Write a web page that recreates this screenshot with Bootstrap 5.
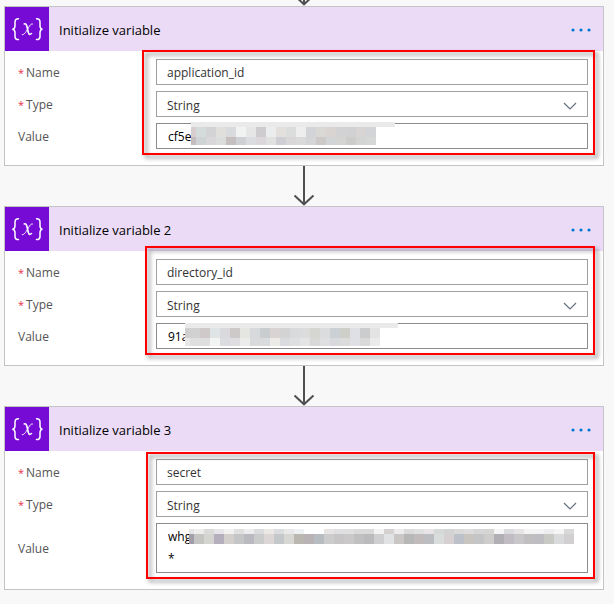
<!DOCTYPE html>
<html lang="en">
<head>
<meta charset="utf-8">
<meta name="viewport" content="width=device-width, initial-scale=1">
<title>Initialize variables</title>
<link href="https://cdn.jsdelivr.net/npm/bootstrap@5.3.0/dist/css/bootstrap.min.css" rel="stylesheet">
<style>
  body { background: #f8f8f8; color: #000; font-family: "Open Sans", "Noto Sans", sans-serif; font-size: 12px; line-height: 18px; }
  .flow { padding: 0 10px 14px 4px; }
  .connector { display: block; margin: 0 auto; stroke: #505050; stroke-width: 2; fill: none; }
  .step { border: 1px solid #c4c4c4; border-radius: 0; background: #fff; }
  .step-head { background: #ebdbf7; height: 44px; }
  .step-icon { width: 44px; height: 44px; background: #770bd6; }
  .step-title { font-size: 13px; line-height: 20px; margin: 2px 0 0 10px; font-weight: 400; }
  .step-menu { padding: 10px 11px 8px; line-height: 1; }
  .step-menu svg { fill: #0078d7; display: block; }
  .step-body { padding: 8px 15px 16px 13px; gap: 6px; }
  .field-label { width: 138px; padding-top: 2px; color: #555; flex: none; }
  .req { color: #e8304a; margin-right: 2px; font-size: 11px; }
  .field { border: 1px solid #a0a0a0; border-radius: 0; height: 26px; padding: 2px 10px; font-size: 12px; line-height: 20px; color: #333; background-color: #fff; }
  .field.entry { border-color: #8c8c8c; padding-left: 11px; color: #000; }
  select.field { padding-top: 4px; padding-bottom: 0; background: #fff url("data:image/svg+xml,%3Csvg xmlns='http://www.w3.org/2000/svg' viewBox='0 0 14 8'%3E%3Cpath d='M1 1l6 6 6-6' fill='none' stroke='%23667080' stroke-width='1.2'/%3E%3C/svg%3E") no-repeat right 10px top 10px / 14px 8px; }
  textarea.field { height: 50px; padding-top: 2px; line-height: 22px; resize: none; overflow: hidden; }
  .callout-frame { position: absolute; border: 2px solid #f00; filter: drop-shadow(3px 3px 2px rgba(0,0,0,.45)); pointer-events: none; }
  .frame-a { top: -1px; left: 137px; right: 8px; bottom: 10px; }
  .frame-b { top: -5px; left: 140px; right: 8px; bottom: 10px; }
  .frame-c { top: 1px; left: 141px; right: 8px; bottom: 10px; }
  .mosaic { position: absolute; }
  .mosaic-a { left: 35px; top: -1px; }
  .mosaic-b { left: 29px; top: 0; }
  .mosaic-c { left: 33px; top: 6px; }
</style>
<script src="https://cdn.jsdelivr.net/npm/bootstrap@5.3.0/dist/js/bootstrap.bundle.min.js"></script>
</head>
<body>
<svg class="d-none" aria-hidden="true">
  <symbol id="variable" viewBox="0 0 44 44">
    <g fill="none" stroke="#fff" stroke-linecap="round">
      <path stroke-width="1.5" d="M13.5 11.8C10.9 11.8 10 12.8 10 15V18.8C10 21 9.2 22.1 7.3 22.2C9.2 22.3 10 23.4 10 25.6V29.4C10 31.6 10.9 32.6 13.5 32.6M31.5 11.8C34.1 11.8 35 12.8 35 15V18.8C35 21 35.8 22.1 37.500 22.2C35.8 22.3 35 23.4 35 25.6V29.4C35 31.6 34.1 32.6 31.5 32.6"/>
      <path stroke-width="1.6" d="M19.2 16.9C20.600 16.500 21.300 17.200 21.800 19L23.400 25.700C23.800 27.600 24.700 28 26.500 26.500"/>
      <path stroke-width="1" d="M27.600 17C26.200 16.500 25.100 17.800 22.900 21.600C20.400 25.900 18.900 28.100 17.200 27.700"/>
    </g>
  </symbol>
  <symbol id="dots" viewBox="0 0 22 6"><circle cx="3" cy="3" r="1.600"/><circle cx="11" cy="3" r="1.600"/><circle cx="19" cy="3" r="1.600"/></symbol>
  <symbol id="arrow" viewBox="0 0 24 40"><path d="M12 0V38M2.500 29.500L12 38.300L21.500 29.500"/></symbol>
</svg>

<main class="flow d-flex flex-column">
  <svg class="connector" width="24" height="6" viewBox="0 34 24 6"><path d="M12 0V38M2.500 29.500L12 38.300L21.500 29.500"/></svg>

  <section class="step">
    <header class="step-head d-flex align-items-center">
      <svg class="step-icon" aria-hidden="true"><use href="#variable"/></svg>
      <h2 class="step-title flex-grow-1">Initialize variable</h2>
      <button type="button" class="step-menu btn border-0" aria-label="More options"><svg width="22" height="6"><use href="#dots"/></svg></button>
    </header>
    <div class="step-body position-relative d-flex flex-column">
      <div class="d-flex align-items-center"><label class="field-label" for="name1"><span class="req">*</span>Name</label><input id="name1" class="field form-control" value="application_id"></div>
      <div class="d-flex align-items-center"><label class="field-label" for="type1"><span class="req">*</span>Type</label><select id="type1" class="field form-select"><option>String</option></select></div>
      <div class="d-flex align-items-center"><label class="field-label" for="value1">Value</label>
        <div class="position-relative flex-grow-1"><input id="value1" class="field entry form-control" value="cf5e"><svg class="mosaic mosaic-a" width="204" height="23" data-strip="204" data-rows="5,10,8"
          data-colors="d8cdcf d5dadb d3d3d6 e0dfdb d9dade f1f3f2 e6e6e6 cfccd0 ecedef e3dfdd dbdddc eeeeee d2d4d7 dad8d5 d9d4d1 d2d2d4 d1d0d2 d9d4d4 d2d4d8|c5bcc0 d0d3d3 d9d7d9 dadddc c5c0bf cfd0d3 dadce0 dbd7da e1e1df cecfd4 d9d7d8 dadadb d3d5d7 cdc9c8 d3d4d5 d4d4d2 cccdcb d3d4d4 d6d8d7"></svg></div></div>
      <div class="callout-frame frame-a"></div>
    </div>
  </section>

  <svg class="connector" width="24" height="40"><use href="#arrow"/></svg>

  <section class="step">
    <header class="step-head d-flex align-items-center">
      <svg class="step-icon" aria-hidden="true"><use href="#variable"/></svg>
      <h2 class="step-title flex-grow-1">Initialize variable 2</h2>
      <button type="button" class="step-menu btn border-0" aria-label="More options"><svg width="22" height="6"><use href="#dots"/></svg></button>
    </header>
    <div class="step-body position-relative d-flex flex-column">
      <div class="d-flex align-items-center"><label class="field-label" for="name2"><span class="req">*</span>Name</label><input id="name2" class="field form-control" value="directory_id"></div>
      <div class="d-flex align-items-center"><label class="field-label" for="type2"><span class="req">*</span>Type</label><select id="type2" class="field form-select"><option>String</option></select></div>
      <div class="d-flex align-items-center"><label class="field-label" for="value2">Value</label>
        <div class="position-relative flex-grow-1"><input id="value2" class="field entry form-control" value="91a"><svg class="mosaic mosaic-b" width="213" height="23" data-strip="213" data-rows="5,10,8"
          data-colors="cfcfcf d1d1d2 cfc9ca dfe4e7 dadade cdc9c8 e5e6e1 d8d9dc c9cdd0 d9d4d3 d3d3d3 d8dadc dcdcdc d5d5d1 dbdcdd cbd0d5 cfcfc9 dfe0e6 cbccce e3e3e3|e7e7e8 dfdfdf dedede f2f4f3 dbdce0 dfdddf ececec d8dadc d9dbdc edebe7 dadbde dedfe1 e4e4e4 d8d8d8 dfdfe1 d7d9dd dcdbdb dfe0e6 d9d9d9 ebebeb"></svg></div></div>
      <div class="callout-frame frame-b"></div>
    </div>
  </section>

  <svg class="connector" width="24" height="40"><use href="#arrow"/></svg>

  <section class="step">
    <header class="step-head d-flex align-items-center">
      <svg class="step-icon" aria-hidden="true"><use href="#variable"/></svg>
      <h2 class="step-title flex-grow-1">Initialize variable 3</h2>
      <button type="button" class="step-menu btn border-0" aria-label="More options"><svg width="22" height="6"><use href="#dots"/></svg></button>
    </header>
    <div class="step-body position-relative d-flex flex-column">
      <div class="d-flex align-items-center"><label class="field-label" for="name3"><span class="req">*</span>Name</label><input id="name3" class="field form-control" value="secret"></div>
      <div class="d-flex align-items-center"><label class="field-label" for="type3"><span class="req">*</span>Type</label><select id="type3" class="field form-select"><option>String</option></select></div>
      <div class="d-flex align-items-center"><label class="field-label" for="value3">Value</label>
        <div class="position-relative flex-grow-1 d-flex"><textarea id="value3" class="field entry form-control" rows="2">whg
*</textarea><svg class="mosaic mosaic-c" width="385" height="15" data-strip="0" data-rows="0,5,10"
          data-colors="e5e5e8 ededed dadad8 e5e5ea f1f1f1 dfdfdf ececef dadbdc ece8e6 dadcde e8e8e8 edf1f4 ffffff ffffff e6e5e4 dfdfe1 dfdfe0 dadada dadada f3f3f3 d5d1d1 ececee dadada dfe1e1 e8e4e5 d5d9d8 d3d3d3 d9d9d9 dcdcdc d6d6d6 d5d6d4 f4f4f4 dadbdf e6e4e5 f4f4f4 f3f3f3 ededef f5f5f5 d9d9d9|a19dab c5c5c3 d4d4d1 b5afbd d3cfcc c4c5c7 bab9bf cacccb ddd6d7 c4c8cb d7d7d4 bab7b1 bab3b6 b6bcbf cccccc c7c5c6 cac8c9 c0c0c1 bbbabd cfced1 e1e2e4 cac6c5 b5b8b6 c1bcbb bcbdc1 d9dddb d6d0d3 bcc0c8 c8c4c0 c4c5c7 cfcdcc b1afb4 c1bcc3 c9c6c9 c0bebf bebdc2 c8c8c5 d8dadc d1cfd0"></svg></div></div>
      <div class="callout-frame frame-c"></div>
    </div>
  </section>
</main>

<script>
  // Fills each redaction mosaic: an optional strip on top, then rows of colour cells.
  document.querySelectorAll('.mosaic').forEach(svg => {
    const add = (x, y, w, h, fill) => {
      const r = document.createElementNS('http://www.w3.org/2000/svg', 'rect');
      Object.entries({ x, y, width: w, height: h, fill, 'shape-rendering': 'crispEdges' }).forEach(([k, v]) => r.setAttribute(k, v));
      svg.append(r);
    };
    const [strip, ...heights] = svg.dataset.rows.split(',').map(Number);
    if (strip) add(0, 0, +svg.dataset.strip, strip, '#eaeaea');
    let y = strip;
    svg.dataset.colors.split('|').forEach((row, i) => {
      row.split(' ').forEach((c, n) => add(n ? n * 10 - 5 : 0, y, n ? 10 : 5, heights[i], '#' + c));
      y += heights[i];
    });
  });
</script>
</body>
</html>
